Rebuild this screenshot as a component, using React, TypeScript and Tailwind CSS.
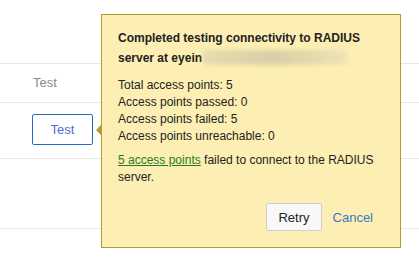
import React from 'react';

const FONT = "font-['Liberation_Sans',Arial,sans-serif]";

export default function App() {
  return (
    <div className={`relative h-[257px] w-[419px] overflow-hidden bg-white ${FONT}`}>
      {/* table rows behind the popover */}
      <div className="h-[63px]" />
      <div className="flex h-[39px] items-center border-t border-[#e6e6e6] pl-[33px] text-[13px] text-[#8a8a8a]">
        Test
      </div>
      <div className="h-[56px] border-t border-[#e6e6e6] pl-[32px] pt-[11px]">
        <button className="h-[31px] w-[61px] rounded-[2px] border border-[#1d6fc8] bg-white text-[13px] text-[#4f6fd4]">
          Test
        </button>
      </div>
      <div className="h-[70px] border-t border-[#e6e6e6]" />
      <div className="border-t border-[#e6e6e6]" />

      {/* RADIUS test result popover */}
      <div className="absolute left-[101px] top-[14px] w-[300px] border border-[#b39a2c] bg-[#fdefb3] px-4 pb-4 pt-[15px] text-[12px] leading-[17px] text-[#222]">
        <div className="absolute left-[-6px] top-[110px] h-0 w-0 border-y-[5px] border-r-[5px] border-y-transparent border-r-[#b39a2c]" />
        <p className="font-bold">
          Completed testing connectivity to RADIUS server at eyein
          <span className="ml-px inline-block h-[15px] w-[144px] translate-y-[3px] bg-gradient-to-r from-[#e6dcb0] via-[#d9cfa6] to-[#efe4b6] blur-[2px]" />
        </p>
        <div className="mt-[10px]">
          <p>Total access points: 5</p>
          <p>Access points passed: 0</p>
          <p>Access points failed: 5</p>
          <p>Access points unreachable: 0</p>
        </div>
        <p className="mt-[7px]">
          <a className="text-[#1f7d1f] underline">5 access points</a> failed to connect to the RADIUS server.
        </p>
        <div className="mt-[17px] flex justify-end">
          <button className="h-[28px] rounded-[2px] border border-[#cfcfcf] bg-[#f8f8f8] px-[11px] text-[13px] text-[#222]">
            Retry
          </button>
          <button className="h-[28px] px-[11px] text-[13px] text-[#3b78c2]">Cancel</button>
        </div>
      </div>
    </div>
  );
}
